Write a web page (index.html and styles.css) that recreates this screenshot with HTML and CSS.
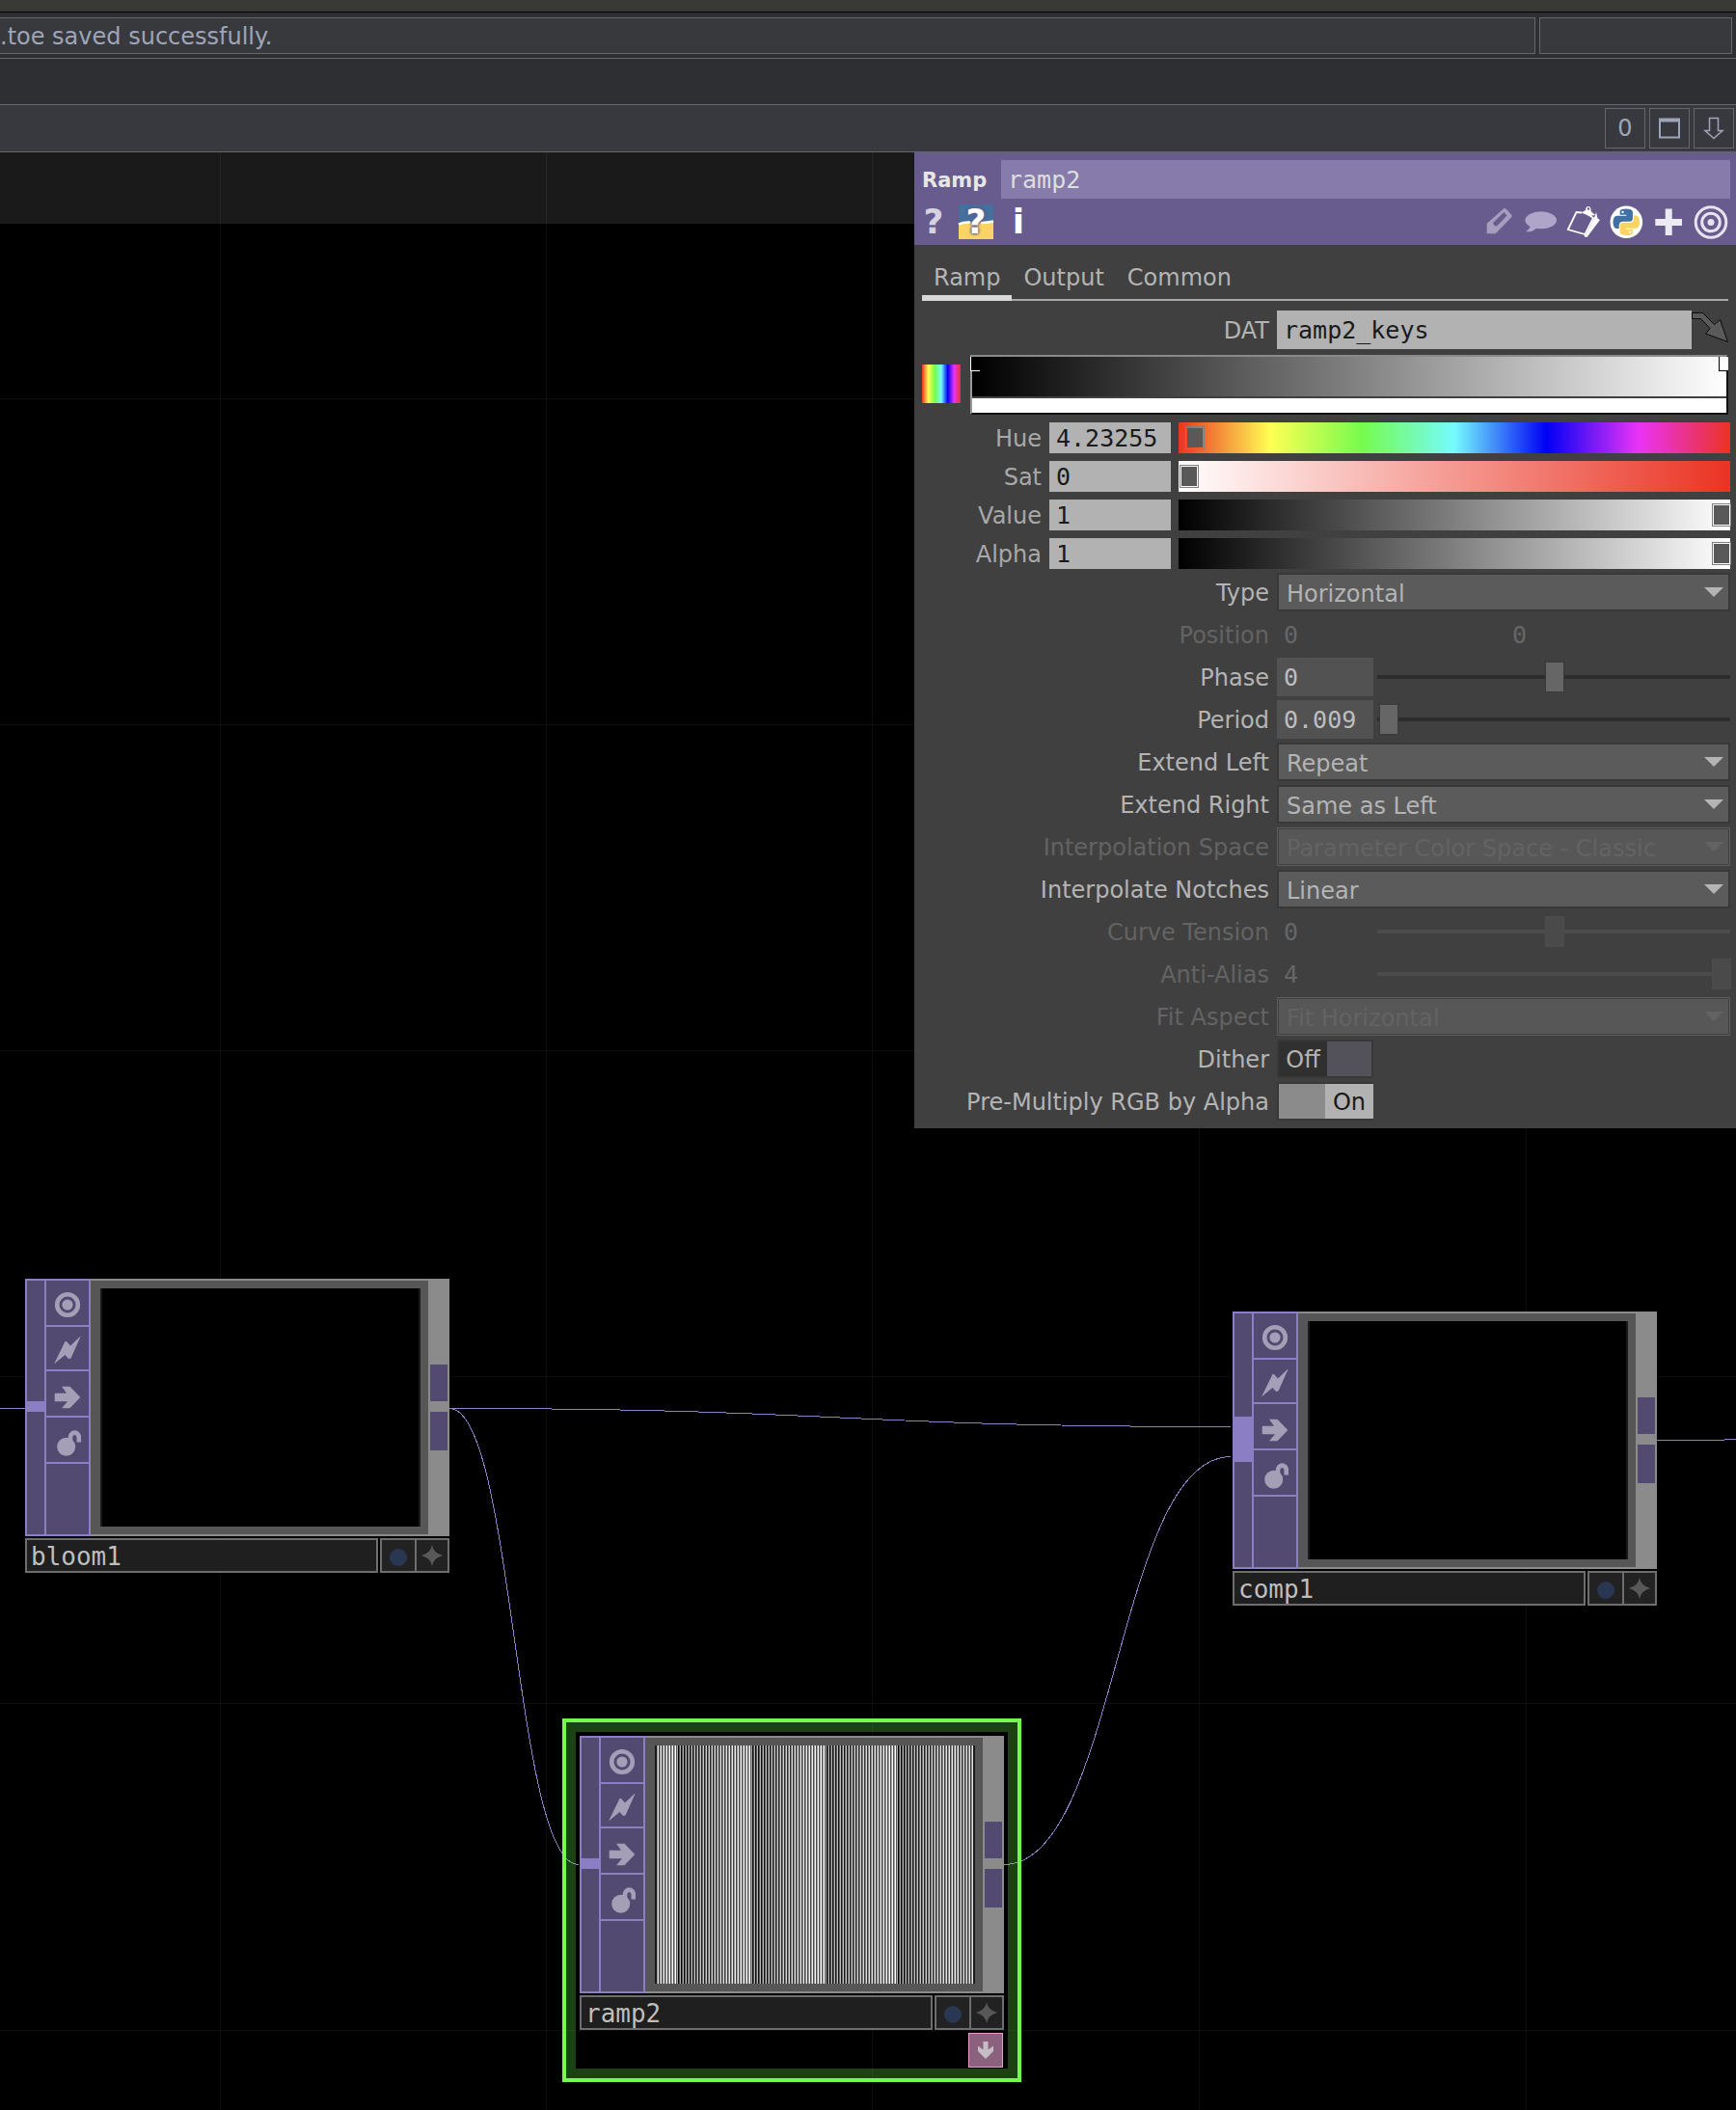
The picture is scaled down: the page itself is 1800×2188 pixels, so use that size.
FILE: index.html
```html
<!DOCTYPE html>
<html lang="en">
<head>
<meta charset="utf-8">
<title>Network editor</title>
<link rel="stylesheet" href="styles.css">
</head>
<body>
<svg class="defs" aria-hidden="true">
  <symbol id="i-view" viewBox="0 0 28 28"><circle cx="14" cy="14" r="10.8" fill="none" stroke="currentColor" stroke-width="4.6"/><circle cx="14" cy="14" r="5.6"/></symbol>
  <symbol id="i-bolt" viewBox="0 0 28 28"><path d="M28 -1 17.500 22.500 15 23 11.500 19 0 28.500 11.500 5 13 5 17 9.500Z"/></symbol>
  <symbol id="i-arrow" viewBox="0 0 28 28"><path d="M1.500 9.700H13L8 2.700H16.500L27.300 14 16.500 25.300H8L14 18.300H1.500Q.7 18.300.7 17.500V10.500Q.7 9.700 1.500 9.700Z"/></symbol>
  <symbol id="i-lock" viewBox="0 0 28 28"><circle cx="12.7" cy="17.3" r="9.500"/><path d="M17 12V7.500a4.400 4.900 0 0 1 8.800 0V12.500" fill="none" stroke="currentColor" stroke-width="4.600"/></symbol>
  <symbol id="i-star" viewBox="0 0 22 22"><path d="M11 0Q12.500 8.500 22 11 12.500 13.500 11 22 9.500 13.500 0 11 9.500 8.500 11 0Z"/></symbol>
</svg>

<header class="top">
  <div class="menu-edge"></div>
  <div class="status-row">
    <output class="status">.toe saved successfully.</output>
    <div class="status-side"></div>
  </div>
  <div class="band"></div>
  <div class="toolbar">
    <button type="button">0</button>
    <button type="button" aria-label="Maximize pane"><svg width="22" height="22" viewBox="0 0 22 22"><path d="M1 2.500V20.500H21V2.500" fill="none" stroke="currentColor" stroke-width="2"/><path d="M0 .5H22V4.500H0Z" fill="currentColor"/></svg></button>
    <button type="button" aria-label="Pane menu"><svg width="22" height="24" viewBox="0 0 22 24"><path d="M6.500 1.500H15.500V14.500H20L11 22.500 2 14.500H6.500Z" fill="none" stroke="currentColor" stroke-width="1.500"/></svg></button>
  </div>
</header>

<main class="network">
  <svg class="wires" aria-hidden="true">
    <g transform="translate(0 -158)">
      <g class="grid">
        <path d="M228.500 158V2400M566.500 158V2400M904.500 158V2400M1243.500 158V2400M1582.500 158V2400"/>
        <path d="M0 413.500H3000M0 751.500H3000M0 1089.500H3000M0 1427.500H3000M0 1766.500H3000M0 2105.500H3000"/>
      </g>
      <g class="links">
        <path d="M0 1460.500H26"/>
        <path d="M466 1460.500C871 1460.500 871 1479.500 1276 1479.500"/>
        <path d="M466 1460.500C533 1460.500 533 1933.500 600 1933.500"/>
        <path d="M1041 1933.500C1158 1933.500 1158 1510.500 1276 1510.500"/>
        <path d="M1718 1493.500H1786L1790 1492.500H1800"/>
      </g>
    </g>
  </svg>

  <article class="node bloom">
    <div class="node-body">
      <div class="inputs"><i></i></div>
      <div class="flags">
        <button type="button" aria-label="Viewer active"><svg><use href="#i-view"/></svg></button>
        <button type="button" aria-label="Cook"><svg><use href="#i-bolt"/></svg></button>
        <button type="button" aria-label="Bypass"><svg><use href="#i-arrow"/></svg></button>
        <button type="button" aria-label="Lock"><svg><use href="#i-lock"/></svg></button>
      </div>
      <div class="viewer"><div class="picture"></div></div>
      <div class="outputs"><i></i><i></i></div>
    </div>
    <div class="node-foot">
      <input type="text" value="bloom1" aria-label="Node name">
      <button type="button" class="dot" aria-label="Display"><i></i></button>
      <button type="button" class="star" aria-label="Viewer flag"><svg><use href="#i-star"/></svg></button>
    </div>
  </article>

  <article class="node comp">
    <div class="node-body">
      <div class="inputs multi"><i></i></div>
      <div class="flags">
        <button type="button" aria-label="Viewer active"><svg><use href="#i-view"/></svg></button>
        <button type="button" aria-label="Cook"><svg><use href="#i-bolt"/></svg></button>
        <button type="button" aria-label="Bypass"><svg><use href="#i-arrow"/></svg></button>
        <button type="button" aria-label="Lock"><svg><use href="#i-lock"/></svg></button>
      </div>
      <div class="viewer"><div class="picture"></div></div>
      <div class="outputs"><i></i><i></i></div>
    </div>
    <div class="node-foot">
      <input type="text" value="comp1" aria-label="Node name">
      <button type="button" class="dot" aria-label="Display"><i></i></button>
      <button type="button" class="star" aria-label="Viewer flag"><svg><use href="#i-star"/></svg></button>
    </div>
  </article>

  <article class="node ramp selected">
    <div class="node-body">
      <div class="inputs"><i></i></div>
      <div class="flags">
        <button type="button" aria-label="Viewer active"><svg><use href="#i-view"/></svg></button>
        <button type="button" aria-label="Cook"><svg><use href="#i-bolt"/></svg></button>
        <button type="button" aria-label="Bypass"><svg><use href="#i-arrow"/></svg></button>
        <button type="button" aria-label="Lock"><svg><use href="#i-lock"/></svg></button>
      </div>
      <div class="viewer"><div class="picture stripes"></div></div>
      <div class="outputs"><i></i><i></i></div>
    </div>
    <div class="node-foot">
      <input type="text" value="ramp2" aria-label="Node name">
      <button type="button" class="dot" aria-label="Display"><i></i></button>
      <button type="button" class="star" aria-label="Viewer flag"><svg><use href="#i-star"/></svg></button>
    </div>
    <button type="button" class="dock" aria-label="Docked operators"><svg width="34" height="34" viewBox="0 0 34 34"><path d="M14.500 8H19.500V16.500L25 12.500V18L17 26 9 18V12.500L14.500 16.500Z" fill="#c6bec6"/></svg></button>
  </article>

  <section class="panel" aria-label="Parameters">
    <div class="head">
      <div class="title-row">
        <label for="opname">Ramp</label>
        <input id="opname" type="text" value="ramp2">
      </div>
      <div class="tools">
        <button type="button" class="glyph help">?</button>
        <button type="button" class="glyph pyhelp"><svg width="36" height="36" viewBox="0 0 36 36" aria-hidden="true"><path d="M0 0H36V36H0Z" fill="#456f9c"/><path d="M0 20Q5 17.500 12 18L24 18.500Q30 18.500 36 17.500V36H0Z" fill="#f9d363"/><path d="M0 20.500Q5 18 12 18.500M23 19Q30 19 36 17.500" fill="none" stroke="#fff" stroke-width="2.500"/></svg><span>?</span></button>
        <button type="button" class="glyph info">i</button>
        <span class="spacer"></span>
        <button type="button" aria-label="Edit"><svg width="36" height="36" viewBox="0 0 36 36"><path fill-rule="evenodd" d="M5.700 19.700 23.500 4 25.500 4.500 31.500 11 31.500 13 14.700 30.300H5.700ZM12 19 13.500 22 16 22.500 26.500 11.500 23.500 8Z" fill="#a59cbe"/></svg></button>
        <button type="button" aria-label="Comment"><svg width="36" height="36" viewBox="0 0 36 36"><ellipse cx="17.700" cy="16.300" rx="16.300" ry="9" fill="#aea5c8"/><path d="M7 21Q7 25 2 28Q10 29.500 14 23Z" fill="#aea5c8"/></svg></button>
        <button type="button" aria-label="Copy parameters"><svg width="36" height="36" viewBox="0 0 36 36"><path d="M16 8.500 10.500 8 1.800 26 19.500 31 28 14 22 10" fill="none" stroke="#fff" stroke-width="1.800"/><path d="M31 8 29 14 20 32 18.500 31 19 33.500 21.500 34 35 16 32.500 14.500Z" fill="#fff"/><path d="M15.500 8.500 20 6Q20 2 23.500 2 26 3 25.500 7L30 11 24 12Z" fill="#fff"/><circle cx="23" cy="4.500" r="1.200" fill="#675c8d"/></svg></button>
        <button type="button" aria-label="Python mode"><svg width="36" height="36" viewBox="0 0 36 36"><circle cx="18.300" cy="18.300" r="16.800" fill="#fff"/><g transform="translate(4.600 4.600) scale(1.140)"><path fill="#4171a3" d="M14.250.18l.9.2.73.26.59.3.45.32.34.34.25.34.16.33.1.3.04.26.02.2-.01.13V8.500l-.05.63-.13.55-.21.46-.26.38-.3.31-.33.25-.35.19-.35.14-.33.1-.3.07-.26.04-.21.02H8.770l-.69.05-.59.14-.5.22-.41.27-.33.32-.27.35-.2.36-.15.37-.1.35-.07.32-.04.27-.02.21v3.060H3.170l-.21-.03-.28-.07-.32-.12-.35-.18-.36-.26-.36-.36-.35-.46-.32-.59-.28-.73-.21-.88-.14-1.050-.05-1.230.06-1.220.16-1.040.24-.87.32-.71.36-.57.4-.44.42-.33.42-.24.4-.16.36-.1.32-.05.24-.01h.16l.06.01h8.160v-.83H6.180l-.01-2.750-.02-.37.05-.34.11-.31.17-.28.25-.26.31-.23.38-.2.44-.18.51-.15.58-.12.64-.1.71-.06.77-.04.84-.02 1.270.05zm-6.300 1.980l-.23.33-.08.41.08.41.23.34.33.22.41.09.41-.09.33-.22.23-.34.08-.41-.08-.41-.23-.33-.33-.22-.41-.09-.41.09z"/><path fill="#f9d363" d="M21.040 6.110l.28.06.32.12.35.18.36.27.36.35.35.47.32.59.28.73.21.88.14 1.040.05 1.230-.06 1.230-.16 1.040-.24.86-.32.71-.36.57-.4.45-.42.33-.42.24-.4.16-.36.09-.32.05-.24.02-.16-.01h-8.220v.82h5.840l.01 2.760.02.36-.05.34-.11.31-.17.29-.25.25-.31.24-.38.2-.44.17-.51.15-.58.13-.64.09-.71.07-.77.04-.84.01-1.270-.04-1.070-.14-.9-.2-.73-.25-.59-.3-.45-.33-.34-.34-.25-.34-.16-.33-.1-.3-.04-.25-.02-.2.01-.13v-5.340l.05-.64.13-.54.21-.46.26-.38.3-.32.33-.24.35-.2.35-.14.33-.1.3-.06.26-.04.21-.02.13-.01h5.840l.69-.05.59-.14.5-.21.41-.28.33-.32.27-.35.2-.36.15-.36.1-.35.07-.32.04-.28.02-.21V6.070h2.090l.14.01zm-6.470 14.250l-.23.33-.08.41.08.41.23.33.33.23.41.08.41-.08.33-.23.23-.33.08-.41-.08-.41-.23-.33-.33-.23-.41-.08-.41.08z"/></g></svg></button>
        <button type="button" aria-label="Add parameters"><svg width="36" height="36" viewBox="0 0 36 36"><path d="M14.700 4.500H21.700V15H32V22H21.700V32H14.700V22H4.300V15H14.700Z" fill="#eceaf3"/></svg></button>
        <button type="button" aria-label="Language target"><svg width="36" height="36" viewBox="0 0 36 36"><g fill="none" stroke="#e6e2ef" stroke-width="3"><circle cx="18" cy="18.500" r="15.800"/><circle cx="18" cy="18.500" r="9.300"/></g><circle cx="18" cy="18.500" r="3.500" fill="#e6e2ef"/></svg></button>
      </div>
    </div>

    <nav class="tabs">
      <a href="#ramp" class="active">Ramp</a>
      <a href="#output">Output</a>
      <a href="#common">Common</a>
    </nav>

    <form class="params">
      <div class="row dat">
        <label for="dat">DAT</label>
        <div class="dat-field">
          <input id="dat" class="text light" type="text" value="ramp2_keys">
          <button type="button" aria-label="Go to DAT"><svg width="40" height="40" viewBox="0 0 40 40"><path d="M.5 2.500H11.500L23.500 14.500 29.500 9.500 37.500 32.500 14.500 24 19 18.500 9.500 8.500H.5Z" fill="#5a5a5a" stroke="#0a0a0a"/></svg></button>
        </div>
      </div>

      <div class="ramp-row">
        <button type="button" class="rainbow" aria-label="Color picker"></button>
        <div class="ramp-view">
          <div class="ramp-colors"></div>
          <div class="ramp-alpha"></div>
          <span class="key first"></span>
          <span class="key last"></span>
        </div>
      </div>

      <div class="colors">
        <div class="color-row">
          <label for="hue">Hue</label>
          <input id="hue" class="text light" type="text" value="4.23255">
          <div class="bar hue"><input type="range" min="0" max="360" step="any" value="4.23255" aria-label="Hue"></div>
        </div>
        <div class="color-row">
          <label for="sat">Sat</label>
          <input id="sat" class="text light" type="text" value="0">
          <div class="bar sat"><input type="range" min="0" max="1" step="any" value="0" aria-label="Sat"></div>
        </div>
        <div class="color-row">
          <label for="val">Value</label>
          <input id="val" class="text light" type="text" value="1">
          <div class="bar gray"><input type="range" min="0" max="1" step="any" value="1" aria-label="Value"></div>
        </div>
        <div class="color-row">
          <label for="alpha">Alpha</label>
          <input id="alpha" class="text light" type="text" value="1">
          <div class="bar gray"><input type="range" min="0" max="1" step="any" value="1" aria-label="Alpha"></div>
        </div>
      </div>

      <div class="row">
        <label for="type">Type</label>
        <div class="select"><select id="type"><option>Horizontal</option></select></div>
      </div>
      <div class="row off">
        <label for="posx">Position</label>
        <div class="pair">
          <input id="posx" class="text" type="text" value="0" disabled>
          <input class="text" type="text" value="0" aria-label="Position Y" disabled>
        </div>
      </div>
      <div class="row">
        <label for="phase">Phase</label>
        <div class="slide"><input id="phase" class="text" type="text" value="0"><div class="track"><input type="range" min="-1" max="1" step="any" value="0" aria-label="Phase"></div></div>
      </div>
      <div class="row">
        <label for="period">Period</label>
        <div class="slide"><input id="period" class="text" type="text" value="0.009"><div class="track"><input type="range" min="0" max="4" step="any" value="0.009" aria-label="Period"></div></div>
      </div>
      <div class="row">
        <label for="extl">Extend Left</label>
        <div class="select"><select id="extl"><option>Repeat</option></select></div>
      </div>
      <div class="row">
        <label for="extr">Extend Right</label>
        <div class="select"><select id="extr"><option>Same as Left</option></select></div>
      </div>
      <div class="row off">
        <label for="space">Interpolation Space</label>
        <div class="select"><select id="space" disabled><option>Parameter Color Space - Classic</option></select></div>
      </div>
      <div class="row">
        <label for="notch">Interpolate Notches</label>
        <div class="select"><select id="notch"><option>Linear</option></select></div>
      </div>
      <div class="row off">
        <label for="tension">Curve Tension</label>
        <div class="slide"><input id="tension" class="text" type="text" value="0" disabled><div class="track"><input type="range" min="-1" max="1" step="any" value="0" aria-label="Curve Tension" disabled></div></div>
      </div>
      <div class="row off">
        <label for="aa">Anti-Alias</label>
        <div class="slide"><input id="aa" class="text" type="text" value="4" disabled><div class="track"><input type="range" min="1" max="4" value="4" aria-label="Anti-Alias" disabled></div></div>
      </div>
      <div class="row off">
        <label for="fit">Fit Aspect</label>
        <div class="select"><select id="fit" disabled><option>Fit Horizontal</option></select></div>
      </div>
      <div class="row">
        <label for="dither">Dither</label>
        <div class="toggle no"><input id="dither" type="checkbox"><span>Off</span><span></span></div>
      </div>
      <div class="row">
        <label for="premult">Pre-Multiply RGB by Alpha</label>
        <div class="toggle yes"><input id="premult" type="checkbox" checked><span></span><span>On</span></div>
      </div>
    </form>
  </section>
</main>
</body>
</html>
```
FILE: styles.css
```css
* { box-sizing: border-box; }

body {
  margin: 0;
  min-height: 100vh;
  display: flex;
  flex-direction: column;
  background: #000;
  color: #b4b4b4;
  font: 24px/36px "DejaVu Sans", sans-serif;
}

button, input, select { font: inherit; color: inherit; margin: 0; border-radius: 0; }
button { padding: 0; border: 0; background: none; }
input[type="text"] {
  font-family: "DejaVu Sans Mono", monospace;
  font-size: 25px;
  border: 0;
  padding: 2px 7px 0;
  min-width: 0;
  width: 100%;
}
svg { display: block; overflow: visible; }
.defs { position: absolute; width: 0; height: 0; }

/* ---- top bars ---- */
.top { color: #9ea5b8; }
.menu-edge { height: 13px; background: #393936; border-bottom: 1px solid #000; }
.status-row {
  display: flex;
  gap: 4px;
  padding: 5px 4px 4px 0;
  background: #2e2f33;
}
.status, .status-side {
  height: 38px;
  line-height: 38px;
  border: 1px solid #66676a;
  background: #38393d;
}
.status { flex: 1; border-left: 0; }
.status-side { width: 200px; }
.band {
  height: 48px;
  background: #2e2f33;
  border-top: 1px solid #66676a;
}
.toolbar {
  display: flex;
  justify-content: flex-end;
  gap: 4px;
  padding: 3px 2px;
  background: #38393e;
  border: solid #66676a;
  border-width: 1px 0;
}
.toolbar button {
  width: 42px;
  height: 42px;
  display: grid;
  place-items: center;
  border: 1px solid #66676a;
}

/* ---- network canvas ---- */
.network {
  position: relative;
  flex: 1;
  min-height: 2030px;
  overflow: hidden;
  background: linear-gradient(#1a1a1a 74px, #000 74px);
}
.wires { position: absolute; inset: 0; width: 100%; height: 100%; fill: none; }
.grid { stroke: #fff; stroke-opacity: 0.05; }
.links { stroke: #8c80c6; shape-rendering: crispEdges; }

.node { position: absolute; width: 440px; }
.bloom { left: 26px; top: 1168px; }
.comp { left: 1278px; top: 1202px; }
.ramp { left: 601px; top: 1642px; }

.node-body { display: flex; height: 267px; }
.inputs {
  width: 22px;
  background: #524a70;
  border: 2px solid #8b7ec4;
}
.inputs i { display: block; height: 11px; margin-top: 125px; background: #8b7ec4; }
.inputs.multi i { height: 47px; margin-top: 107px; }
.flags {
  width: 46px;
  display: flex;
  flex-direction: column;
  background: #524a70;
  border: solid #8b7ec4;
  border-width: 2px 2px 2px 0;
}
.flags button {
  height: 48px;
  padding: 4px 8px 0;
  border-bottom: 2px solid #8b7ec4;
  color: #a49fb6;
}
.flags button:nth-child(2) { height: 46px; }
.flags button:nth-child(n + 3) { padding-top: 8px; }
.flags svg { width: 28px; height: 28px; fill: currentColor; }
.viewer {
  flex: 1;
  display: flex;
  padding: 8px 8px 8px 10px;
  background: #565656;
  border: solid #8b8b8b;
  border-width: 2px 0;
}
.picture {
  flex: 1;
  background: #000;
  border: solid #1a1a1a;
  border-width: 0 2px;
}
.stripes {
  background: repeating-linear-gradient(90deg, #000 0, #fff 0.9%) -16px 0 / 329px 100%;
}
.outputs {
  width: 22px;
  display: flex;
  flex-direction: column;
  gap: 11px;
  padding: 89px 2px 0;
  background: #8b8b8b;
}
.outputs i { height: 38px; background: #524a70; }
.outputs i + i { height: 40px; }

.node-foot { display: flex; height: 36px; margin-top: 2px; }
.node-foot input[type="text"] {
  flex: 1;
  margin-right: 2px;
  padding: 2px 4px 0;
  font-size: 26px;
  border: 2px solid #6e6e6e;
  background: #1f1f1f;
  color: #bebebe;
}
.node-foot button {
  display: grid;
  place-items: center;
  border: 2px solid #6e6e6e;
  background: #222;
}
.dot { width: 38px; }
.dot i { width: 18px; height: 18px; margin-top: 3px; border-radius: 50%; background: #2a3752; }
.node-foot .star { width: 34px; border-left: 0; }
.star svg { width: 22px; height: 22px; fill: #585858; }
.dock {
  display: block;
  width: 36px;
  height: 36px;
  margin: 3px 1px 0 auto;
  border: 1px solid #e89ccb;
  background: #8b617d;
}
.selected::before {
  content: "";
  position: absolute;
  inset: -18px -18px -15px;
  border: 4px solid #75fc4d;
  box-shadow: inset 0 0 0 10px rgba(110, 250, 70, 0.26);
  pointer-events: none;
}

/* ---- parameter panel ---- */
.panel {
  position: absolute;
  top: 0;
  right: 0;
  width: 852px;
  padding-bottom: 8px;
  background: #404040;
}
.head { background: #675c8d; padding-top: 8px; }
.title-row { display: flex; height: 40px; padding: 0 6px 0 8px; }
.title-row label {
  flex: 0 0 82px;
  line-height: 42px;
  font-size: 21px;
  font-weight: bold;
  color: #e6e6e6;
}
.title-row input[type="text"] { background: #867bab; color: #dedede; }
.tools { display: flex; gap: 8px; padding: 6px 8px 6px 2px; }
.tools button { width: 36px; height: 36px; }
.spacer { flex: 1; }
.tools .glyph { font-size: 36px; line-height: 36px; font-weight: bold; color: #fff; }
.tools .help { color: #d6d2e3; }
.pyhelp { display: grid; }
.pyhelp svg, .pyhelp span { grid-area: 1 / 1; }
.pyhelp span { position: relative; text-shadow: 0 0 3px #675c8d, 0 0 3px #675c8d, 0 0 3px #675c8d; }

.tabs {
  display: flex;
  margin: 0 8px;
  padding-top: 16px;
  box-shadow: inset 0 -2px #a8a8a8;
}
.tabs a {
  padding: 0 12px;
  color: #b4b4b4;
  text-decoration: none;
  border-bottom: 6px solid transparent;
}
.tabs .active { border-color: #d8d8d8; }

.params {
  display: flex;
  flex-direction: column;
  gap: 4px;
  padding: 10px 6px 0 8px;
}
.row {
  display: grid;
  grid-template: 40px / 360px 1fr;
  column-gap: 8px;
}
.row label, .color-row label { text-align: right; line-height: 42px; white-space: nowrap; }
.row.off { color: #636363; }
.text { background: #525252; color: #bebebe; }
.text:disabled { background: none; color: #666; }
.text.light { background: #b2b2b2; color: #1a1a1a; }

.dat-field { display: flex; }
.dat-field button { width: 40px; height: 40px; flex: none; }

.ramp-row { display: flex; align-items: flex-start; gap: 10px; padding: 2px 2px 4px 0; }
.rainbow, .hue {
  background: linear-gradient(90deg, #ea3323, #ffff54, #75fb4c, #75fbfd, #0000f5, #ea33f7, #ea3323);
}
.rainbow { width: 40px; height: 40px; margin-top: 10px; }
.ramp-view {
  position: relative;
  flex: 1;
  border: 2px solid #111;
  border-top-color: #8a8a8a;
  border-left-color: #999;
}
.ramp-colors { height: 43px; background: linear-gradient(90deg, #000, #fff); border-bottom: 2px solid #404040; }
.ramp-alpha { height: 15px; background: #fff; }
.key { position: absolute; top: 0; width: 10px; height: 15px; border: 1px solid #fff; border-top: 0; }
.first { left: -2px; background: #000; border-right: 0; }
.last { right: -2px; background: #fff; border-color: #000; border-right: 0; }

.colors { display: grid; gap: 8px; }
.color-row {
  display: grid;
  grid-template: 32px / 124px 126px 1fr;
  column-gap: 8px;
  color: #a8a8a8;
}
.color-row label { line-height: 34px; }
.color-row .text { height: 32px; }
.bar, .track { display: flex; min-height: 0; }
.sat { background: linear-gradient(90deg, #fff, #ea3323); }
.gray { background: linear-gradient(90deg, #000, #fff); }

input[type="range"] {
  flex: 1;
  min-width: 0;
  margin: 0 -1px 0 1px;
  appearance: none;
  background: none;
}
input[type="range"]::-webkit-slider-thumb {
  appearance: none;
  width: 20px;
  height: 32px;
  padding: 1px;
  border: 1px solid #3a3a3a;
  background: #666;
}
.bar input[type="range"]::-webkit-slider-thumb {
  height: 24px;
  border-color: #808080;
  background: #595959 content-box;
}
.off input[type="range"]::-webkit-slider-thumb { border-color: #4c4c4c; background: #4a4a4a; }

.pair { display: flex; gap: 4px; }
.slide { display: grid; grid-template-columns: 100px 1fr; column-gap: 4px; }
.track { background: linear-gradient(#2d2d2d, #2d2d2d) center / 100% 4px no-repeat; }
.off .track { background-image: linear-gradient(#4c4c4c, #4c4c4c); }

.select { position: relative; }
.select::after {
  content: "";
  position: absolute;
  right: 7px;
  top: 15px;
  border: solid transparent;
  border-width: 10px 10px 0;
  border-top-color: #b4b4b4;
  pointer-events: none;
}
select {
  appearance: none;
  width: 100%;
  height: 40px;
  padding: 2px 8px 0;
  border: 2px solid #383838;
  background: #5b5b5b;
  line-height: 36px;
}
select:disabled { opacity: 1; color: #636363; background: #575757; border-color: #404040; outline: 1px solid #5c5c5c; outline-offset: -1px; }
.off .select::after { border-top-color: #636363; }

.toggle {
  position: relative;
  display: flex;
  width: 100px;
  border: 2px solid #383838;
  line-height: 38px;
  text-align: center;
}
.toggle input { position: absolute; inset: 0; width: 100%; height: 100%; margin: 0; opacity: 0; }
.toggle span { flex: 1; height: 36px; }
.no span { background: #303030; }
.no span + span { flex: 0 0 46px; background: #53525a; }
.yes { border-right: 0; }
.yes span { background: #8b8b8b; }
.yes span + span { flex: 0 0 50px; background: #b2b2b2; color: #1a1a1a; }
```
